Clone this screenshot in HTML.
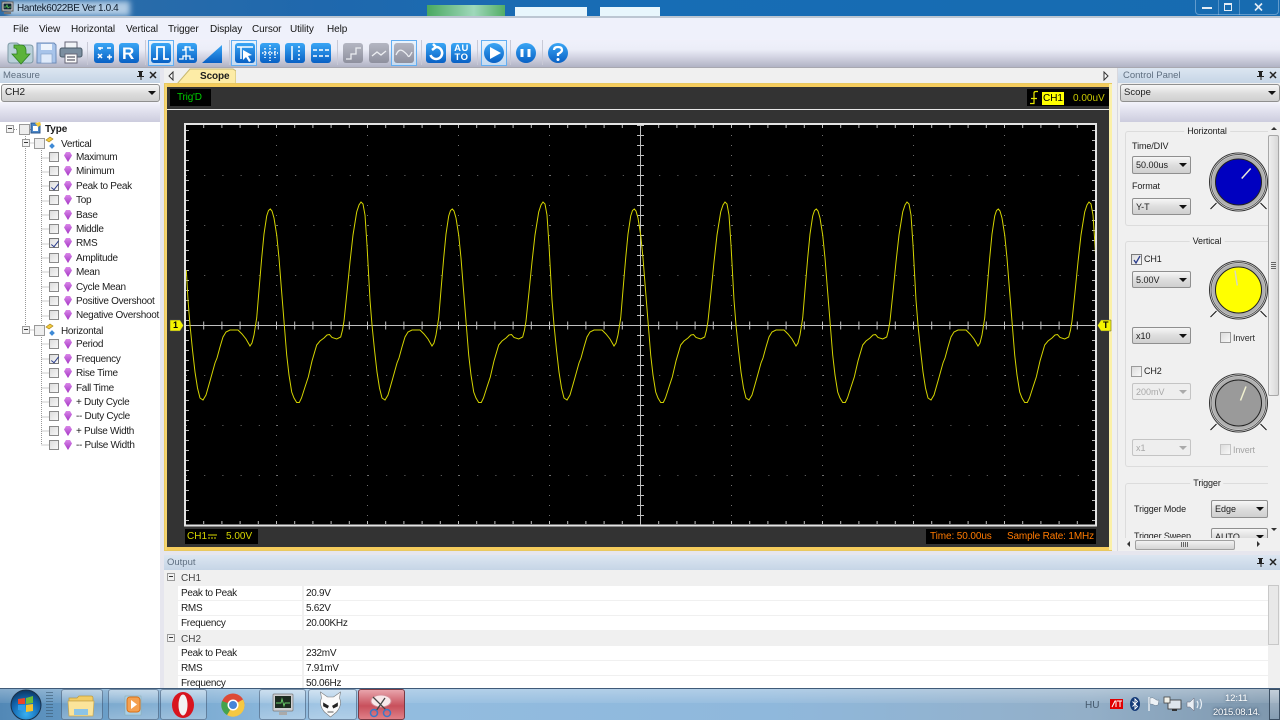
<!DOCTYPE html>
<html><head><meta charset="utf-8"><title>Hantek6022BE</title>
<style>
*{box-sizing:border-box}
html,body{margin:0;padding:0}
body{width:1280px;height:720px;overflow:hidden;position:relative;background:#f0f0f0;font:10px "Liberation Sans",sans-serif;color:#1c1c1c;letter-spacing:-.3px}
.a,.t,.r,.c,.g{position:absolute}
.t{white-space:nowrap;line-height:13px}
.bar{position:absolute;left:0;top:0;width:1280px;height:17px;background:linear-gradient(90deg,#2f6ea8 0,#1f68ad 25%,#176db5 50%,#176bb0 100%)}
.menu span{position:absolute;top:23px;line-height:13px;letter-spacing:-.1px;color:#151515}
.pn{position:absolute;height:15px;background:linear-gradient(#dce6f1,#c6d5e6);color:#5f6f80;line-height:16px;padding-left:3px;font-size:9.500px;letter-spacing:0}
.c{border:1px solid #8f8f8f;border-radius:2px;background:linear-gradient(#f6f6f6,#dedede 50%,#cfcfcf);line-height:16px;padding-left:3px;letter-spacing:0;font-size:9px}
.c:after{content:"";position:absolute;right:3px;top:6px;border:4px solid transparent;border-top:4px solid #111;border-bottom:0}
.c.d{background:#eee;border-color:#c4c4c4;color:#a8a8a8}
.c.d:after{border-top-color:#aaa}
.strip{position:absolute;height:20px;background:linear-gradient(#f3f3fb,#ccccde)}
.r{left:0;width:160px;height:14px;line-height:14px;white-space:nowrap}
.r b{position:absolute;left:49px;top:2px;width:10px;height:10px;border:1px solid #8a8a8a;background:linear-gradient(135deg,#ddd,#f7f7f7)}
.r b.k{border-color:#777}
.r b.k:after{content:"";position:absolute;left:3px;top:0;width:3px;height:7px;border:solid #2a3c8c;border-width:0 1.5px 1.5px 0;transform:rotate(38deg)}
.r i{position:absolute;left:64px;top:2px;width:8px;height:10px;clip-path:polygon(25% 0,75% 0,100% 35%,50% 100%,0 35%);background:linear-gradient(#d987e8,#a434c4)}
.r span{position:absolute;left:76px;top:1px}
.pm{position:absolute;width:8px;height:8px;border:1px solid #9a9a9a;background:#f2f2f2}
.pm:after{content:"";position:absolute;left:1px;top:2px;width:4px;height:1px;background:#333}
.g{border:1px solid #dcdcdc;border-right:0;border-radius:3px 0 0 3px}
.g u{position:absolute;top:-7px;left:81px;transform:translateX(-50%);padding:0 3px;text-decoration:none;background:#f0f0f0;line-height:13px;letter-spacing:-.1px;font-size:9px;white-space:nowrap}
.ck{position:absolute;width:11px;height:11px;border:1px solid #9a9a9a;background:linear-gradient(135deg,#dcdcdc,#f8f8f8)}
.lb{position:absolute;background:#000;color:#d7d700;font-size:10px;line-height:16px;letter-spacing:0;white-space:nowrap}
.row{position:absolute;left:178px;width:1090px;height:14px;background:#fff;line-height:16px}
.row:after{content:"";position:absolute;left:124px;top:0;width:2px;height:14px;background:#f0f0f0}
.row span{position:absolute;left:3px}.row em{position:absolute;left:128px;font-style:normal}
.tb{position:absolute;top:689px;height:31px;border:1px solid rgba(50,75,105,.55);border-radius:3px;background:linear-gradient(rgba(255,255,255,.4),rgba(255,255,255,.12) 50%,rgba(255,255,255,.28))}
.s9{font-size:9px;letter-spacing:-.1px}
</style></head><body>

<div class="bar"></div>
<div class="a" style="left:8px;top:1px;width:122px;height:15px;background:#c8dcee;opacity:.85;filter:blur(3px)"></div>
<div class="a" style="left:427px;top:5px;width:78px;height:12px;background:linear-gradient(90deg,#49a860,#9fd8bb 60%,#52ad65)"></div>
<div class="a" style="left:515px;top:7px;width:72px;height:10px;background:#e8f6fc"></div>
<div class="a" style="left:600px;top:7px;width:60px;height:10px;background:#e8f6fc"></div>
<svg class="a" style="left:1px;top:1px" width="14" height="14"><rect x="1" y="1" width="11" height="9" fill="#ddd" stroke="#555"/><rect x="2.500" y="2.500" width="8" height="6" fill="#123"/><path d="M3 6h2l1-2 1 3 1-1h2" stroke="#5c5" fill="none" stroke-width=".8"/><rect x="3" y="11" width="7" height="2" fill="#777"/></svg>
<div class="t" style="left:17px;top:2px;color:#0e1c2c;font-size:10px;letter-spacing:-.4px">Hantek6022BE Ver 1.0.4</div>
<div class="a" style="left:1195px;top:0;width:84px;height:15px;border:1px solid rgba(190,215,240,.45);border-top:0;border-radius:0 0 4px 4px"></div>
<div class="a" style="left:1218px;top:0;width:1px;height:15px;background:rgba(190,215,240,.35)"></div>
<div class="a" style="left:1239px;top:0;width:1px;height:15px;background:rgba(190,215,240,.35)"></div>
<div class="a" style="left:1202px;top:7px;width:10px;height:2px;background:#e4ecf4"></div>
<div class="a" style="left:1224px;top:3px;width:8px;height:8px;border:1px solid #e4ecf4;border-top-width:2px"></div>
<svg class="a" style="left:1253px;top:2px" width="12" height="10"><path d="M2 1.500l7 7M9 1.500L2 8.500" stroke="#e4ecf4" stroke-width="1.600"/></svg>

<div class="a" style="left:0;top:16px;width:1280px;height:2px;background:#bcc6d2"></div>
<div class="a menu" style="left:0;top:18px;width:1280px;height:21px;background:#eff1fb"></div>
<div class="menu">
<span style="left:13px">File</span><span style="left:39px">View</span><span style="left:71px">Horizontal</span><span style="left:126px">Vertical</span><span style="left:168px">Trigger</span><span style="left:210px">Display</span><span style="left:252px">Cursor</span><span style="left:290px">Utility</span><span style="left:327px">Help</span>
</div>
<div class="a" style="left:0;top:39px;width:1280px;height:29px;background:linear-gradient(#f0f1fb 0,#eceef8 35%,#d5d6e4 60%,#aeb0c2 100%)"></div>
<div class="a" style="left:0;top:67px;width:1280px;height:1px;background:#a8a8b0"></div>

<svg class="a" style="left:0;top:38px" width="600" height="30">
<defs>
<linearGradient id="bl" x1="0" y1="0" x2="0" y2="1"><stop offset="0" stop-color="#3aa6f5"/><stop offset="1" stop-color="#0860c4"/></linearGradient>
<linearGradient id="gr" x1="0" y1="0" x2="0" y2="1"><stop offset="0" stop-color="#b4b6c2"/><stop offset="1" stop-color="#8e909e"/></linearGradient>
<linearGradient id="sel" x1="0" y1="0" x2="0" y2="1"><stop offset="0" stop-color="#ecf5fe"/><stop offset="1" stop-color="#c4daf0"/></linearGradient>
</defs>
<!-- open -->
<path d="M8 8q0-3 3-3h6l3 2h10q3 0 3 3v12q0 3-3 3H11q-3 0-3-3z" fill="#b9d0da" stroke="#7f9aa6"/>
<path d="M14 7h7q5 0 5 6v3h4l-9 10-9-10h5v-3q0-3-3-3z" fill="#5cb33a" stroke="#2f7f24" stroke-width=".8"/>
<!-- save -->
<path d="M37 5h17l2 2v18H37z" fill="#a8c4ea" stroke="#6e8cb8"/><rect x="41" y="6" width="11" height="6" fill="#eef4fc"/><rect x="41" y="16" width="11" height="9" fill="#dfeafa" stroke="#7f9cc4" stroke-width=".6"/>
<!-- print -->
<rect x="65" y="4" width="12" height="7" fill="#f2f4f8" stroke="#667"/><rect x="60" y="10" width="22" height="9" rx="2" fill="#7b8ea0" stroke="#4a5a68"/><rect x="65" y="16" width="12" height="9" fill="#fafafa" stroke="#667"/><path d="M67 19h8M67 22h8" stroke="#334" stroke-width="1"/>
<g fill="#c8c9d6"><rect x="87" y="4" width="1" height="23"/><rect x="145" y="2" width="1" height="25"/><rect x="229" y="2" width="1" height="25"/><rect x="337" y="2" width="1" height="25"/><rect x="421" y="2" width="1" height="25"/><rect x="477" y="2" width="1" height="25"/><rect x="510" y="2" width="1" height="25"/><rect x="542" y="2" width="1" height="25"/></g>
<!-- selected frames -->
<g fill="url(#sel)" stroke="#62aef2"><rect x="148.500" y="2.500" width="25" height="25"/><rect x="231.500" y="2.500" width="25" height="25"/><rect x="391.500" y="2.500" width="25" height="25"/><rect x="481.500" y="2.500" width="25" height="25"/></g>
<!-- blue tiles -->
<g fill="url(#bl)"><rect x="94" y="5" width="20" height="20" rx="3"/><rect x="119" y="5" width="20" height="20" rx="3"/><rect x="151" y="5" width="20" height="20" rx="3"/><rect x="177" y="5" width="20" height="20" rx="3"/><rect x="235" y="5" width="20" height="20" rx="3"/><rect x="260" y="5" width="20" height="20" rx="3"/><rect x="285" y="5" width="20" height="20" rx="3"/><rect x="311" y="5" width="20" height="20" rx="3"/><rect x="426" y="5" width="20" height="20" rx="3"/><rect x="451" y="5" width="20" height="20" rx="3"/>
<path d="M202 25l20-18v18z"/>
<circle cx="494" cy="15" r="10"/><circle cx="526" cy="15" r="10"/><circle cx="558" cy="15" r="10"/></g>
<g fill="url(#gr)"><rect x="343" y="5" width="20" height="20" rx="3"/><rect x="369" y="5" width="20" height="20" rx="3"/><rect x="394" y="5" width="20" height="20" rx="3"/></g>
<!-- glyphs -->
<g stroke="#fff" stroke-width="1.800" fill="none">
<path d="M98 10h5M107 10h4M100 9v3M98 20l4-4M102 20l-4-4M107 19h5M109.500 16.500v5" stroke-width="1.500"/>
<path d="M153 21h4V9h7v12h5"/>
<path d="M179 21h4v-3h7v3h4M182 12h3V9h5v3h4M186 8v14" stroke-width="1.300"/>
<path d="M237 9h16M241 9v12" stroke-width="1.500"/><path d="M243 12l9 5-4 1 3 5-2 1-3-5-3 3z" fill="#fff" stroke="none"/>
<path d="M262 15h16M270 7v16M265 10v10M275 10v10" stroke-dasharray="1.500 1.500" stroke-width="1.500"/>
<path d="M292 8v14" stroke-width="1.500"/><path d="M299 8v14" stroke-width="1.500" stroke-dasharray="2 2"/>
<path d="M313 12h16M313 18h16" stroke-width="1.500" stroke-dasharray="4 2"/>
<path d="M346 21h5v-5h5v-6h5M372 18l5-4 4 3 5-4" stroke="#eceef2" stroke-width="1.300"/>
<path d="M396 17q3-7 7-4t5 5 4-4" stroke="#eceef2" stroke-width="1.300"/>
<path d="M436 9a6 6 0 1 1-5.500 8M436 9l-3-3M436 9l-4 3" stroke-width="2.500"/>
<path d="M522 11v8M529 11v8" stroke-width="3"/>
<path d="M554 12q0-3 4-3t4 3q0 2-4 4v2" stroke-width="2.300"/>
</g>
<path d="M490 9l11 6-11 6z" fill="#fff"/><circle cx="558" cy="21.500" r="1.500" fill="#fff"/>
</svg>
<div class="t" style="left:122px;top:44px;color:#fff;font:bold 17px/20px 'Liberation Sans',sans-serif;letter-spacing:0">R</div>
<div class="t" style="left:453px;top:44px;color:#fff;font:bold 9.5px/9px 'Liberation Sans',sans-serif;letter-spacing:.5px;text-align:center;width:17px;white-space:normal">AU TO</div>

<!-- LEFT -->
<div class="a" style="left:0;top:68px;width:160px;height:620px;background:#fff"></div>
<div class="pn" style="left:0;top:68px;width:160px">Measure</div>
<svg class="a" style="left:134px;top:70px" width="24" height="11"><path d="M4 1h5v1H8v4h2v1H7.500v3h-1V7H3V6h2V2H4z" fill="#222"/><path d="M16 2l6 6M22 2l-6 6" stroke="#222" stroke-width="1.500"/></svg>
<div class="c" style="left:1px;top:84px;width:159px;height:18px;border-radius:3px;font-size:10px">CH2</div>
<div class="strip" style="left:0;top:102px;width:160px"></div>

<svg class="a" style="left:0;top:120px" width="160" height="340">
<g stroke="#999" stroke-dasharray="1 1" fill="none"><path d="M25.500 14v197M25.500 23h9M25.500 210h9M41.500 30v174M41.500 38h7M41.500 52h7M41.500 66h7M41.500 81h7M41.500 95h7M41.500 109h7M41.500 124h7M41.500 138h7M41.500 152h7M41.500 167h7M41.500 181h7M41.500 196h7M41.500 217v108M41.500 224h7M41.500 239h7M41.500 253h7M41.500 268h7M41.500 282h7M41.500 297h7M41.500 311h7M41.500 325h7M14 9.500h4M30 9.500h4"/></g>
<g fill="#eee" stroke="#999"><rect x="19.500" y="4.500" width="10" height="10"/><rect x="34.500" y="18.500" width="10" height="10"/><rect x="34.500" y="205.500" width="10" height="10"/></g>
<g fill="#f3c93c" stroke="#a8851c" stroke-width=".7"><path d="M46 20l4-3 3 2-4 3z"/><path d="M46 207l4-3 3 2-4 3z"/></g>
<g fill="#3e8ad6"><rect x="50" y="24" width="4" height="4" transform="rotate(45 52 26)"/><rect x="50" y="211" width="4" height="4" transform="rotate(45 52 213)"/></g>
<rect x="31" y="3" width="9" height="10" fill="#4a86c8" stroke="#2a558c"/><rect x="33" y="6" width="5" height="5" fill="#fff"/><path d="M35 3l5-1 1 3-3 2z" fill="#f2c73a"/>
</svg>
<div class="pm" style="left:6px;top:125px"></div><div class="pm" style="left:22px;top:139px"></div><div class="pm" style="left:22px;top:326px"></div>
<div class="t" style="left:45px;top:123px;font-weight:bold;letter-spacing:-.1px">Type</div>
<div class="t" style="left:61px;top:138px">Vertical</div>
<div class="t" style="left:61px;top:325px">Horizontal</div>
<div class="r" style="top:150px"><b></b><i></i><span>Maximum</span></div>
<div class="r" style="top:164px"><b></b><i></i><span>Minimum</span></div>
<div class="r" style="top:179px"><b class="k"></b><i></i><span>Peak to Peak</span></div>
<div class="r" style="top:193px"><b></b><i></i><span>Top</span></div>
<div class="r" style="top:208px"><b></b><i></i><span>Base</span></div>
<div class="r" style="top:222px"><b></b><i></i><span>Middle</span></div>
<div class="r" style="top:236px"><b class="k"></b><i></i><span>RMS</span></div>
<div class="r" style="top:251px"><b></b><i></i><span>Amplitude</span></div>
<div class="r" style="top:265px"><b></b><i></i><span>Mean</span></div>
<div class="r" style="top:280px"><b></b><i></i><span>Cycle Mean</span></div>
<div class="r" style="top:294px"><b></b><i></i><span>Positive Overshoot</span></div>
<div class="r" style="top:308px"><b></b><i></i><span>Negative Overshoot</span></div>
<div class="r" style="top:337px"><b></b><i></i><span>Period</span></div>
<div class="r" style="top:352px"><b class="k"></b><i></i><span>Frequency</span></div>
<div class="r" style="top:366px"><b></b><i></i><span>Rise Time</span></div>
<div class="r" style="top:381px"><b></b><i></i><span>Fall Time</span></div>
<div class="r" style="top:395px"><b></b><i></i><span>+ Duty Cycle</span></div>
<div class="r" style="top:409px"><b></b><i></i><span>-- Duty Cycle</span></div>
<div class="r" style="top:424px"><b></b><i></i><span>+ Pulse Width</span></div>
<div class="r" style="top:438px"><b></b><i></i><span>-- Pulse Width</span></div>

<!-- divider strip -->
<div class="a" style="left:160px;top:68px;width:4px;height:620px;background:#e6e6ee"></div>

<!-- SCOPE -->
<div class="a" style="left:164px;top:68px;width:953px;height:15px;background:#f0f0f0"></div>
<svg class="a" style="left:167px;top:71px" width="8" height="10"><path d="M6 1L2 5l4 4z" fill="#fff" stroke="#333"/></svg>
<svg class="a" style="left:1102px;top:71px" width="8" height="10"><path d="M2 1l4 4-4 4z" fill="#fff" stroke="#333"/></svg>
<svg class="a" style="left:176px;top:68px" width="60" height="16"><path d="M1 16L14 1h43l3 2v13z" fill="#fdeca6" stroke="#c8b870"/></svg>
<div class="t" style="left:200px;top:70px;font-weight:bold;letter-spacing:-.1px">Scope</div>
<div class="a" style="left:164px;top:83px;width:948px;height:468px;background:#fbe9a4;border:1px solid #e8c860"></div>
<div class="a" style="left:165px;top:84px;width:946px;height:3px;background:#f5cc5c"></div>
<div class="a" style="left:165px;top:547px;width:946px;height:3px;background:#f5cc5c"></div>
<div class="a" style="left:165px;top:84px;width:2px;height:466px;background:#f5d470"></div>
<div class="a" style="left:1109px;top:84px;width:3px;height:466px;background:#fbf0a8"></div>
<div class="a" style="left:167px;top:87px;width:942px;height:460px;background:#333"></div>
<div class="a" style="left:167px;top:109px;width:942px;height:1px;background:#e8e8e8"></div>
<div class="lb" style="left:170px;top:89px;width:41px;height:17px;color:#00cc00;padding-left:7px;line-height:18px;letter-spacing:-.2px">Trig'D</div>
<div class="lb" style="left:1027px;top:89px;width:82px;height:17px"></div>
<svg class="a" style="left:1029px;top:90px" width="12" height="16"><path d="M1 13.500h4V3q0-1.500 2-1.500h2M2 8.500h6" stroke="#e8e800" stroke-width="1.200" fill="none"/></svg>
<div class="t" style="left:1042px;top:92px;width:22px;height:13px;background:#ffff00;color:#000;font-size:10px;line-height:14px;letter-spacing:0;text-align:center">CH1</div>
<div class="t" style="left:1073px;top:92px;color:#c8c800;font-size:10px;line-height:14px;letter-spacing:0">0.00uV</div>

<svg class="a" style="left:0;top:0" width="1280" height="560">
<defs><clipPath id="cl"><rect x="186" y="125" width="909" height="399"/></clipPath>
<path id="w" fill="none" d="M190 325 192.500 350 195 372 197.500 388 200 398 203 400 206 395 210 381 215 363 217 358 220 347 223 337 226 332 230 330 238 330 242 334 246 339 250 346 252 343 254 335 256.700 318 259 290 261.700 258 264 234 266.700 216 268.500 210.500 270.300 209 272 211 274 218 276.700 235 279 258 281.500 290 284.300 325 286.700 355 289 375 291.700 392 294 398 296.700 402.500 299.300 402.500 301.500 398 305 387 308.300 377 312 361 316.700 345 320 341 324 338 327 335 329.500 334.500 332 337.500 336.700 339 340.700 337 342.500 330 344 321 347 292 350 262 353 235 356.700 212 359 205 361 202 363 204 365 215 367 245 370 300 372 325"/></defs>
<rect x="185" y="124" width="911" height="401.500" fill="#000" stroke="#e4e4e4" stroke-width="2"/>
<g stroke="#6e6e6e" stroke-width="1" fill="none">
<g stroke-dasharray="1 17.200"><path d="M186 175.500H1095M186 225.500H1095M186 275.500H1095M186 375.500H1095M186 425.500H1095M186 475.500H1095"/></g>
<g stroke-dasharray="1 9"><path d="M276.500 125V525M367.500 125V525M458.500 125V525M549.500 125V525M731.500 125V525M822.500 125V525M913.500 125V525M1004.500 125V525"/></g>
</g>
<!-- border ticks -->
<g stroke="#bdbdbd" fill="none">
<path d="M186 126.500H1095M186 522.500H1095" stroke-width="3" stroke-dasharray="1 17.200" stroke-dashoffset="-17.200"/>
<path d="M187.500 125V525M1093.500 125V525" stroke-width="3" stroke-dasharray="1 9" stroke-dashoffset="-5"/>
</g>
<!-- axes -->
<g stroke="#c0c0c0" fill="none">
<path d="M186 325.500H1095"/><path d="M640.500 125V525"/>
<path d="M186 325.500H1095" stroke-width="8" stroke-dasharray="1 17.200" stroke-dashoffset="-17.200"/>
<path d="M640.500 125V525" stroke-width="7" stroke-dasharray="1 9"/>
</g>
<g clip-path="url(#cl)" stroke="#d4d400" stroke-width="1">
<path fill="none" d="M186.300 270 188 300 190 325"/>
<use href="#w"/><use href="#w" x="182"/><use href="#w" x="364"/><use href="#w" x="546"/><use href="#w" x="728"/>
</g>
<path d="M170 320h10l3.500 5.500-3.500 5.500h-10z" fill="#f4f400" stroke="#555" stroke-width=".5"/>
<path d="M1111 320h-10l-3.500 5.500 3.500 5.500h10z" fill="#f4f400" stroke="#555" stroke-width=".5"/>
</svg>
<div class="t" style="left:173px;top:319px;font-weight:bold;color:#000;font-size:9px">1</div>
<div class="t" style="left:1103px;top:319px;font-weight:bold;color:#000;font-size:9px">T</div>

<div class="lb" style="left:185px;top:529px;width:73px;height:15px;padding-left:2px">CH1</div>
<svg class="a" style="left:207px;top:533px" width="12" height="8"><path d="M1 2h9" stroke="#d7d700"/><path d="M1 5h9" stroke="#d7d700" stroke-dasharray="2 1"/></svg>
<div class="t" style="left:226px;top:530px;color:#d7d700;font-size:10px;line-height:14px;letter-spacing:0">5.00V</div>
<div class="lb" style="left:926px;top:529px;width:170px;height:15px;color:#ff7a00;padding-left:4px;letter-spacing:-.1px">Time: 50.00us</div>
<div class="t" style="left:1007px;top:530px;color:#ff7a00;font-size:10px;line-height:14px;letter-spacing:-.15px">Sample Rate: 1MHz</div>

<!-- RIGHT PANEL -->
<div class="a" style="left:1112px;top:68px;width:168px;height:487px;background:#f0f0f0"></div>
<div class="a" style="left:1117px;top:68px;width:1px;height:487px;background:#d8d8de"></div>
<div class="pn" style="left:1118px;top:68px;width:162px;padding-left:5px">Control Panel</div>
<svg class="a" style="left:1254px;top:70px" width="24" height="11"><path d="M4 1h5v1H8v4h2v1H7.500v3h-1V7H3V6h2V2H4z" fill="#222"/><path d="M16 2l6 6M22 2l-6 6" stroke="#222" stroke-width="1.500"/></svg>
<div class="c" style="left:1120px;top:84px;width:160px;height:18px;border-radius:3px;font-size:9.500px">Scope</div>
<div class="strip" style="left:1120px;top:102px;width:160px"></div>

<div class="g" style="left:1125px;top:131px;width:143px;height:95px"><u>Horizontal</u></div>
<div class="g" style="left:1125px;top:241px;width:143px;height:226px"><u>Vertical</u></div>
<div class="g" style="left:1125px;top:483px;width:143px;height:60px"><u>Trigger</u></div>

<div class="t s9" style="left:1132px;top:140px">Time/DIV</div>
<div class="c" style="left:1132px;top:156px;width:59px;height:18px">50.00us</div>
<div class="t s9" style="left:1132px;top:180px">Format</div>
<div class="c" style="left:1132px;top:198px;width:59px;height:17px">Y-T</div>

<div class="ck" style="left:1131px;top:254px;border-color:#7a7a7a"></div>
<svg class="a" style="left:1132px;top:254px" width="10" height="11"><path d="M2 6l2 3 4-7" stroke="#2a3c8c" stroke-width="1.300" fill="none"/></svg>
<div class="t s9" style="left:1144px;top:253px">CH1</div>
<div class="c" style="left:1132px;top:271px;width:59px;height:17px">5.00V</div>
<div class="c" style="left:1132px;top:327px;width:59px;height:17px">x10</div>
<div class="ck" style="left:1220px;top:332px"></div>
<div class="t s9" style="left:1233px;top:332px;color:#333">Invert</div>

<div class="ck" style="left:1131px;top:366px"></div>
<div class="t s9" style="left:1144px;top:365px">CH2</div>
<div class="c d" style="left:1132px;top:383px;width:59px;height:17px">200mV</div>
<div class="c d" style="left:1132px;top:439px;width:59px;height:17px">x1</div>
<div class="ck" style="left:1220px;top:444px;border-color:#c4c4c4"></div>
<div class="t s9" style="left:1233px;top:444px;color:#a4a4a4">Invert</div>

<div class="t s9" style="left:1134px;top:503px">Trigger Mode</div>
<div class="c" style="left:1211px;top:500px;width:57px;height:18px">Edge</div>

<div class="a" style="left:1125px;top:525px;width:143px;height:13px;overflow:hidden">
<div class="t s9" style="left:9px;top:5px">Trigger Sweep</div>
<div class="c" style="left:86px;top:3px;width:57px;height:18px">AUTO</div>
</div>

<svg class="a" style="left:1195px;top:150px" width="90" height="320">
<defs><g id="kn"><path d="M-22 21l-6 6M22 21l6 6" stroke="#111"/><circle r="29" fill="#fff" stroke="#333" stroke-width="1"/><circle r="27.500" fill="#d8d8d8" stroke="#555" stroke-width="1"/><circle r="26.500" fill="#b0b0b0"/></g></defs>
<g transform="translate(43.500 32)"><use href="#kn"/><circle r="23" fill="#0000c0" stroke="#222" stroke-width="1"/><path d="M3.200-3.500l9-10" stroke="#e8e8d8" stroke-width="1.500"/></g>
<g transform="translate(43.500 140)"><use href="#kn"/><circle r="23" fill="#ffff00" stroke="#222" stroke-width="1"/><path d="M-1.200-4.500L-3.500-19.500" stroke="#d8d8c0" stroke-width="1.500"/></g>
<g transform="translate(43.500 253)"><use href="#kn"/><circle r="23" fill="#9a9a9a" stroke="#222" stroke-width="1"/><path d="M2-2.500l5.500-14" stroke="#f0f0d0" stroke-width="1.500"/></g>
</svg>

<!-- scrollbars right -->
<div class="a" style="left:1268px;top:122px;width:12px;height:416px;background:#f0f0f0"></div>
<div class="a" style="left:1268px;top:135px;width:11px;height:261px;border:1px solid #a8a8a8;border-radius:2px;background:linear-gradient(90deg,#efefef,#d8d8d8)"></div>
<div class="a" style="left:1271px;top:262px;width:5px;height:7px;background:repeating-linear-gradient(#666 0 1px,transparent 1px 2px)"></div>
<svg class="a" style="left:1268px;top:122px" width="12" height="412"><path d="M3 8l3-3 3 3z" fill="#333"/><path d="M3 406l3 3 3-3z" fill="#333"/></svg>
<div class="a" style="left:1120px;top:538px;width:160px;height:13px;background:#f0f0f0"></div>
<svg class="a" style="left:1124px;top:538px" width="140" height="12"><path d="M6 3L3 6l3 3zM133 3l3 3-3 3z" fill="#333"/></svg>
<div class="a" style="left:1135px;top:540px;width:100px;height:10px;border:1px solid #a0a0a0;border-radius:2px;background:linear-gradient(#f2f2f2,#d4d4d4)"></div>
<div class="a" style="left:1181px;top:542px;width:7px;height:5px;background:repeating-linear-gradient(90deg,#666 0 1px,transparent 1px 2px)"></div>

<!-- OUTPUT -->
<div class="a" style="left:164px;top:551px;width:1116px;height:4px;background:#e6e6ee"></div>
<div class="a" style="left:164px;top:555px;width:1116px;height:133px;background:#f0f0f0"></div>
<div class="pn" style="left:164px;top:555px;width:1116px">Output</div>
<svg class="a" style="left:1254px;top:557px" width="24" height="11"><path d="M4 1h5v1H8v4h2v1H7.500v3h-1V7H3V6h2V2H4z" fill="#222"/><path d="M16 2l6 6M22 2l-6 6" stroke="#222" stroke-width="1.500"/></svg>
<div class="pm" style="left:167px;top:573px"></div>
<div class="t" style="left:181px;top:572px;color:#444;letter-spacing:0">CH1</div>
<div class="row" style="top:586px"><span>Peak to Peak</span><em>20.9V</em></div>
<div class="row" style="top:601px"><span>RMS</span><em>5.62V</em></div>
<div class="row" style="top:616px"><span>Frequency</span><em>20.00KHz</em></div>
<div class="pm" style="left:167px;top:634px"></div>
<div class="t" style="left:181px;top:633px;color:#444;letter-spacing:0">CH2</div>
<div class="row" style="top:646px"><span>Peak to Peak</span><em>232mV</em></div>
<div class="row" style="top:661px"><span>RMS</span><em>7.91mV</em></div>
<div class="row" style="top:676px;height:12px;overflow:hidden"><span>Frequency</span><em>50.06Hz</em></div>
<div class="a" style="left:1268px;top:570px;width:12px;height:118px;background:#f0f0f0"></div>
<div class="a" style="left:1268px;top:585px;width:11px;height:60px;border:1px solid #c8c8c8;background:#e8e8e8"></div>

<!-- TASKBAR -->
<div class="a" style="left:0;top:688px;width:1280px;height:32px;background:linear-gradient(90deg,#5288b6 0,#6a9ec8 8%,#93bde0 25%,#8fb8dc 60%,#93afc8 85%,#7e97ad 100%);border-top:1px solid #3f5a78"></div>
<div class="a" style="left:0;top:689px;width:1280px;height:14px;background:linear-gradient(rgba(255,255,255,.3),rgba(255,255,255,.08))"></div>
<svg class="a" style="left:8px;top:689px" width="36" height="31">
<defs><radialGradient id="o" cx=".5" cy=".8" r=".8"><stop offset="0" stop-color="#39b0f0"/><stop offset=".6" stop-color="#1266b0"/><stop offset="1" stop-color="#0c3660"/></radialGradient></defs>
<circle cx="18" cy="16" r="15" fill="url(#o)" stroke="#1a3048"/>
<path d="M10 10l7-1v6h-7z" fill="#e8452c"/><path d="M18 9l7-2v7l-7 1z" fill="#6cbd3a"/><path d="M10 16h7v6l-7-1z" fill="#2e9ce8"/><path d="M18 16l7-1v7l-7 1z" fill="#f6c22c"/>
</svg>
<div class="a" style="left:46px;top:692px;width:7px;height:25px;background:repeating-linear-gradient(#3a5870 0 1px,transparent 1px 3px);opacity:.6"></div>
<div class="tb" style="left:61px;width:42px"></div>
<div class="tb" style="left:108px;width:51px"></div>
<div class="tb" style="left:160px;width:47px"></div>
<div class="tb" style="left:259px;width:47px"></div>
<div class="tb" style="left:308px;width:49px"></div>
<div class="tb" style="left:358px;width:47px;background:linear-gradient(#e8a4ac,#c8505c 55%,#e08088);border-color:#7a3a44"></div>
<svg class="a" style="left:60px;top:689px" width="350" height="31">
<path d="M9 9h8l2-2h12q2 0 2 2v3H9z" fill="#f2cd66" stroke="#bd9a3e" stroke-width=".7"/><path d="M8 12h26l-1 15H9z" fill="#fbe49a" stroke="#c8a54e" stroke-width=".7"/><rect x="14" y="20" width="14" height="6" fill="#8cc4e6"/>
<g transform="translate(3 0)"><rect x="62" y="7" width="16" height="19" fill="#a8cfe8" stroke="#8aa" stroke-width=".5"/><rect x="64" y="8" width="13" height="15" rx="3" fill="#f4a050" stroke="#d87018"/><path d="M68 11l6 4.500-6 4.500z" fill="#fff"/></g>
<ellipse cx="123" cy="16" rx="11" ry="13" fill="#d8141e"/><ellipse cx="123" cy="16" rx="4.500" ry="10.500" fill="#f2f2f2"/>
<circle cx="173" cy="16" r="11.500" fill="#dd4a36"/><path d="M173 16l10-5.500A11.500 11.500 0 0 1 167 26z" fill="#f5c842"/><path d="M173 16l-6 10A11.500 11.500 0 0 1 162 12z" fill="#45a34c"/><circle cx="173" cy="16" r="5.500" fill="#fff"/><circle cx="173" cy="16" r="4" fill="#4684d8"/>
<rect x="213" y="5" width="20" height="17" rx="1" fill="#cfcfd2" stroke="#777" stroke-width=".7"/><rect x="215" y="7" width="16" height="12" fill="#1c2a20"/><path d="M216 14h5l1-4 2 7 1-3h5" stroke="#6cd06c" fill="none" stroke-width=".9"/><rect x="219" y="23" width="8" height="3" fill="#aaa"/>
<g transform="translate(-2.500 0)"><path d="M264 9l-1-6 7 5h6l7-5-1 6q3 7-3 14l-6 5-6-5q-6-7-3-14z" fill="#fafafa" stroke="#777" stroke-width=".6"/><path d="M266 14l5 3-1 2-4-2zM280 14l-5 3 1 2 4-2zM270 23h6" stroke="#222" fill="#222" stroke-width=".7"/></g>
<ellipse cx="321" cy="12" rx="10" ry="6" fill="#f8e8ea" stroke="#d4909a"/><path d="M313 8l13 13M325 9l-9 13" stroke="#444" stroke-width="1.300"/><circle cx="314" cy="24" r="3.500" fill="none" stroke="#3a78c8" stroke-width="1.500"/><circle cx="327" cy="24" r="3.500" fill="none" stroke="#3a78c8" stroke-width="1.500"/>
</svg>
<div class="t" style="left:1085px;top:699px;color:#44586c;letter-spacing:0">HU</div>
<svg class="a" style="left:1105px;top:692px" width="105" height="24">
<rect x="5" y="7" width="13" height="10" fill="#e00000"/><path d="M7 15l3-6h1v6M12 9h5M15 9v6" stroke="#fff" fill="none" stroke-width="1"/>
<ellipse cx="30" cy="12" rx="5" ry="7" fill="#143a78"/><path d="M27.500 9.500l5 5-2.500 2.500v-10l2.500 2.500-5 5" stroke="#fff" fill="none" stroke-width=".9"/>
<path d="M44 5v14" stroke="#eef2f6" stroke-width="1.300"/><path d="M45 6q3-1 5 1t4 1l-1 5q-3 1-4 0t-4-1z" fill="#eef2f6" stroke="#5a6a7a" stroke-width=".4"/>
<rect x="63" y="8" width="13" height="9" fill="#dfe6ec" stroke="#333" stroke-width=".8"/><rect x="67" y="17" width="5" height="2" fill="#333"/><rect x="59" y="5" width="6" height="6" fill="#f2f2ea" stroke="#444" stroke-width=".8"/>
<path d="M82 10h3l4-4v13l-4-4h-3z" fill="#e8eef4" stroke="#667" stroke-width=".5"/><path d="M92 9q2 3 0 7M95 7q3 5 0 10" stroke="#e8eef4" fill="none" stroke-width="1.200"/>
</svg>
<div class="t" style="left:1225px;top:692px;color:#fff;font-size:9.500px;letter-spacing:-.1px;text-shadow:0 0 3px #3a5068">12:11</div>
<div class="t" style="left:1213px;top:706px;color:#fff;font-size:9.500px;letter-spacing:-.3px;text-shadow:0 0 3px #3a5068,0 0 2px #3a5068">2015.08.14.</div>
<div class="a" style="left:1269px;top:689px;width:11px;height:31px;border:1px solid #3c5064;background:linear-gradient(rgba(255,255,255,.35),rgba(255,255,255,.05))"></div>
</body></html>
